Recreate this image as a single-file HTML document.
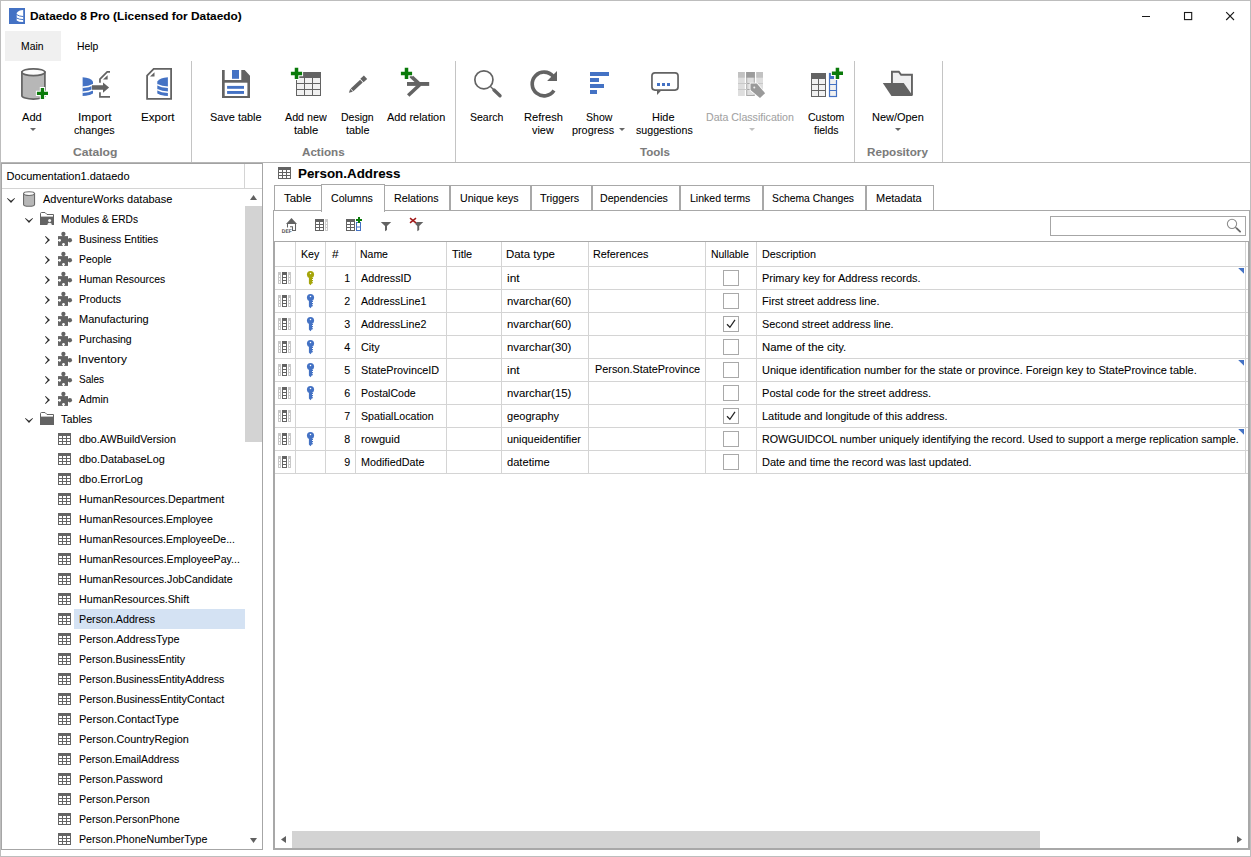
<!DOCTYPE html>
<html lang="en"><head><meta charset="utf-8"><title>Dataedo 8 Pro</title>
<style>
*{box-sizing:border-box;margin:0;padding:0}
html,body{width:1251px;height:857px;overflow:hidden;background:#fff}
body{position:relative;font-family:"Liberation Sans",sans-serif;font-size:11px;color:#000;-webkit-text-stroke-width:.07px}
.a{position:absolute}
.t{position:absolute;white-space:nowrap;line-height:20px;height:20px;transform-origin:0 50%}
.b{font-weight:bold}
.ln{position:absolute;background:#d4d4d4}
.sep{position:absolute;top:61px;height:101px;width:1px;background:#c4c4c4}
.dd{position:absolute;width:0;height:0;border-left:3px solid transparent;border-right:3px solid transparent;border-top:3px solid #666}
.tab{position:absolute;top:185px;height:26px;border:1px solid #a8a8a8;background:#fff}
.tab.act{top:184px;height:28px;border-bottom:none;z-index:3}
.cb{position:absolute;width:16px;height:16px;border:1px solid #a9a9a9;background:#fff}
svg{position:absolute;overflow:visible}
</style></head>
<body>
<div class="a" style="left:0;top:0;width:1251px;height:857px;border:1px solid #bdbdbd"></div>
<svg style="left:9px;top:8px" width="16" height="16" viewBox="0 0 16 16"><rect width="16" height="16" fill="#4472c4"/><path d="M14.2 2Q9.6 2.2 7.7 5V12.4Q9.6 14 14.2 14.1Z" fill="#fff"/><path d="M7.3 6.4Q10 8.4 14.5 8.6M7.3 9.9Q10 11.5 14.5 11.6" stroke="#4472c4" stroke-width="1" fill="none"/></svg>
<div class="t b" style="left:29.60px;transform:scaleX(1.0792);top:6px">Dataedo 8 Pro (Licensed for Dataedo)</div>
<div class="a" style="left:1142px;top:16px;width:8px;height:1px;background:#1a1a1a"></div>
<svg style="left:1184px;top:12px" width="9" height="9" viewBox="0 0 9 9"><rect x=".5" y=".5" width="7.2" height="7.1" stroke="#1a1a1a" stroke-width="1.1" fill="none"/></svg>
<svg style="left:1226px;top:12px" width="9" height="9" viewBox="0 0 9 9"><path d="M.2 .2L8 8M8 .2L.2 8" stroke="#1a1a1a" stroke-width="1.15" fill="none"/></svg>
<div class="a" style="left:5px;top:31px;width:56px;height:30px;background:#f0f0f0"></div>
<div class="t" style="left:21.00px;transform:scaleX(0.9442);top:36px">Main</div>
<div class="t" style="left:76.80px;transform:scaleX(0.9464);top:36px">Help</div>
<div class="sep" style="left:191px"></div>
<div class="sep" style="left:455px"></div>
<div class="sep" style="left:854px"></div>
<div class="sep" style="left:942px"></div>
<div class="ln" style="left:1px;top:162px;width:1249px;height:1px;background:#b6b6b6"></div>
<div class="t" style="left:21.70px;transform:scaleX(1.0075);top:107px">Add</div>
<div class="dd" style="left:30.3px;top:128px"></div>
<div class="t" style="left:77.81px;transform:scaleX(1.0800);top:107px">Import</div>
<div class="t" style="left:74.40px;transform:scaleX(0.9765);top:120px">changes</div>
<div class="t" style="left:141.30px;transform:scaleX(1.0556);top:107px">Export</div>
<div class="t" style="left:209.80px;transform:scaleX(0.9930);top:107px">Save table</div>
<div class="t" style="left:285.30px;transform:scaleX(0.9752);top:107px">Add new</div>
<div class="t" style="left:294.30px;transform:scaleX(1.0196);top:120px">table</div>
<div class="t" style="left:341.00px;transform:scaleX(0.9554);top:107px">Design</div>
<div class="t" style="left:345.80px;transform:scaleX(0.9817);top:120px">table</div>
<div class="t" style="left:387.30px;transform:scaleX(0.9917);top:107px">Add relation</div>
<div class="t" style="left:469.90px;transform:scaleX(0.9558);top:107px">Search</div>
<div class="t" style="left:523.70px;transform:scaleX(1.0105);top:107px">Refresh</div>
<div class="t" style="left:532.30px;transform:scaleX(0.9881);top:120px">view</div>
<div class="t" style="left:585.70px;transform:scaleX(0.9575);top:107px">Show</div>
<div class="t" style="left:571.90px;transform:scaleX(0.9839);top:120px">progress</div>
<div class="dd" style="left:619.3px;top:128px"></div>
<div class="t" style="left:652.30px;transform:scaleX(0.9953);top:107px">Hide</div>
<div class="t" style="left:636.30px;transform:scaleX(0.9661);top:120px">suggestions</div>
<div class="t" style="color:#a2a2a2;left:706.30px;transform:scaleX(0.9651);top:107px">Data Classification</div>
<div class="dd" style="left:748.6px;top:128px;border-top-color:#c0c0c0"></div>
<div class="t" style="left:807.90px;transform:scaleX(0.9593);top:107px">Custom</div>
<div class="t" style="left:813.70px;transform:scaleX(0.9550);top:120px">fields</div>
<div class="t" style="left:871.90px;transform:scaleX(0.9951);top:107px">New/Open</div>
<div class="dd" style="left:895.4px;top:128px"></div>
<div class="t b" style="color:#7b7b7b;left:73.20px;transform:scaleX(1.1005);top:142px">Catalog</div>
<div class="t b" style="color:#7b7b7b;left:301.50px;transform:scaleX(1.0567);top:142px">Actions</div>
<div class="t b" style="color:#7b7b7b;left:640.30px;transform:scaleX(1.0494);top:142px">Tools</div>
<div class="t b" style="color:#7b7b7b;left:866.90px;transform:scaleX(1.0594);top:142px">Repository</div>
<svg style="left:20px;top:67px" width="32" height="34" viewBox="0 0 32 34"><path d="M1.9 5.2V28.65A11.5 3.4 0 0 0 24.9 28.65V5.2Z" fill="#b7b7b7" stroke="#636363" stroke-width="1.7"/><ellipse cx="13.4" cy="5.2" rx="11.5" ry="3.4" fill="#fbfbfb" stroke="#636363" stroke-width="1.7"/><path d="M20.80 20.90h3.3v3.90h3.90v3.3h-3.90v3.90h-3.3v-3.90h-3.90v-3.3h3.90Z" fill="#fff" stroke="#fff" stroke-width="2"/><path d="M20.80 20.90h3.3v3.90h3.90v3.3h-3.90v3.90h-3.3v-3.90h-3.90v-3.3h3.90Z" fill="#0a7a0a"/></svg>
<svg style="left:80px;top:67px" width="32" height="34" viewBox="0 0 32 34"><path d="M2.65 10.3Q10.5 10.6 13 14.6V26.5Q10 28.8 2.65 29.1Z" fill="#4472c4"/><path d="M2.4 20.3Q9 19.9 13.2 17.6M2.4 25.3Q9 24.9 13.2 22.6M4.6 30.1Q10.5 29.5 13.4 27.3" stroke="#fff" stroke-width="1.5" fill="none"/><path d="M19.95 15.7V12.1L27.2 4.85H30M19.95 25.3V29.85H30" stroke="#636363" stroke-width="1.7" fill="none"/><path d="M27.6 8.2V12.6H23Z" fill="#636363"/><path d="M12 18.2H23V15.5L29.1 20.5L23 25.7V22.8H12Z" fill="#636363" stroke="#fff" stroke-width="1" paint-order="stroke"/></svg>
<svg style="left:143px;top:67px" width="32" height="34" viewBox="0 0 32 34"><path d="M4.1 8.6L10.7 1.9H28.1V31.8H4.1Z" fill="#fff" stroke="#636363" stroke-width="1.8"/><path d="M11.5 5.3V9.6H7Z" fill="#636363"/><path d="M24.9 10.3Q17 10.6 14.3 14.6V26.5Q17.3 28.8 24.9 29.1Z" fill="#4472c4"/><path d="M25.2 20.3Q18.5 19.9 14.1 17.6M25.2 25.3Q18.5 24.9 14.1 22.6M22.9 30.1Q17 29.5 13.9 27.3" stroke="#fff" stroke-width="1.5" fill="none"/></svg>
<svg style="left:220px;top:67px" width="32" height="34" viewBox="0 0 32 34"><path d="M2 3H4.7V13H21.3V3H24.7L30 8.7V31H2Z" fill="#636363"/><rect x="4.7" y="15.7" width="22.7" height="13.3" fill="#fff"/><rect x="12" y="3" width="7" height="8.8" fill="#4472c4"/><rect x="7.1" y="18.9" width="16.9" height="2.9" fill="#4472c4"/><rect x="7.1" y="24" width="16.9" height="2.9" fill="#4472c4"/></svg>
<svg style="left:290px;top:67px" width="32" height="34" viewBox="0 0 32 34"><rect x="6" y="5" width="25" height="24" fill="#636363"/><rect x="7" y="11" width="7" height="5" fill="#f1f1f1"/><rect x="7" y="17" width="7" height="5" fill="#f1f1f1"/><rect x="7" y="23" width="7" height="5" fill="#f1f1f1"/><rect x="15" y="11" width="7" height="5" fill="#f1f1f1"/><rect x="15" y="17" width="7" height="5" fill="#f1f1f1"/><rect x="15" y="23" width="7" height="5" fill="#f1f1f1"/><rect x="23" y="11" width="7" height="5" fill="#f1f1f1"/><rect x="23" y="17" width="7" height="5" fill="#f1f1f1"/><rect x="23" y="23" width="7" height="5" fill="#f1f1f1"/><path d="M4.75 0.80h3.5v3.85h3.85v3.5h-3.85v3.85h-3.5v-3.85h-3.85v-3.5h3.85Z" fill="#fff" stroke="#fff" stroke-width="2"/><path d="M4.75 0.80h3.5v3.85h3.85v3.5h-3.85v3.85h-3.5v-3.85h-3.85v-3.5h3.85Z" fill="#0a7a0a"/></svg>
<svg style="left:341px;top:67px" width="32" height="34" viewBox="0 0 32 34"><g transform="translate(7.9 25.7) rotate(-42.9)" fill="#636363"><path d="M0 0L3.6 -1.9V1.9Z"/><rect x="4.3" y="-1.9" width="12.8" height="3.8"/><rect x="17.8" y="-2.4" width="4.9" height="4.8"/></g></svg>
<svg style="left:400px;top:67px" width="32" height="34" viewBox="0 0 32 34"><rect x="7" y="15" width="22.2" height="3.9" fill="#636363"/><path d="M8.2 28.6L20 17.4" stroke="#636363" stroke-width="3.5" fill="none"/><path d="M10.4 8.6L20 17.6" stroke="#636363" stroke-width="3.5" fill="none"/><path d="M4.75 0.80h3.5v3.85h3.85v3.5h-3.85v3.85h-3.5v-3.85h-3.85v-3.5h3.85Z" fill="#fff" stroke="#fff" stroke-width="2"/><path d="M4.75 0.80h3.5v3.85h3.85v3.5h-3.85v3.85h-3.5v-3.85h-3.85v-3.5h3.85Z" fill="#0a7a0a"/></svg>
<svg style="left:471px;top:67px" width="32" height="34" viewBox="0 0 32 34"><circle cx="12.9" cy="12.85" r="9.05" fill="none" stroke="#636363" stroke-width="1.7"/><path d="M19.2 19.2L23 23" stroke="#636363" stroke-width="1.3"/><path d="M23 23.1L29 28.8" stroke="#636363" stroke-width="3.4" stroke-linecap="round"/></svg>
<svg style="left:528px;top:67px" width="32" height="34" viewBox="0 0 32 34"><path d="M25.97 23.6A11.9 11.9 0 1 1 25.08 9.14" fill="none" stroke="#636363" stroke-width="3.65"/><path d="M29 4.1V13.9H19.1Z" fill="#636363"/></svg>
<svg style="left:584px;top:67px" width="32" height="34" viewBox="0 0 32 34"><rect x="6" y="5" width="19" height="4" fill="#4472c4"/><rect x="6" y="11" width="9" height="4" fill="#4472c4"/><rect x="6" y="17" width="14" height="4" fill="#4472c4"/><rect x="6" y="23" width="7" height="4" fill="#4472c4"/></svg>
<svg style="left:649px;top:67px" width="32" height="34" viewBox="0 0 32 34"><path d="M8 23V28L12.8 23Z" fill="#636363"/><rect x="2.95" y="5.85" width="26.1" height="17.2" rx="3" ry="3" fill="#fff" stroke="#636363" stroke-width="1.7"/><rect x="8" y="16" width="3" height="3" fill="#4472c4"/><rect x="13" y="16" width="3" height="3" fill="#4472c4"/><rect x="18" y="16" width="3" height="3" fill="#4472c4"/></svg>
<svg style="left:735px;top:67px" width="32" height="34" viewBox="0 0 32 34"><rect x="3" y="5" width="6.8" height="24" fill="#dedede"/><rect x="3" y="5" width="6.8" height="5.7" fill="#c2c2c2"/><rect x="11.2" y="5" width="8.6" height="24" fill="#a9a9a9"/><rect x="11.2" y="5" width="8.6" height="5.7" fill="#9c9c9c"/><rect x="21.25" y="5" width="6.75" height="24" fill="#dedede"/><rect x="21.25" y="5" width="6.75" height="5.7" fill="#c2c2c2"/><rect x="12.2" y="10.7" width="6.6" height="17.3" fill="#dedede"/><path d="M3 16.5H28M3 22.5H28" stroke="#c9c9c9" stroke-width="1"/><path d="M12.2 16.5H18.8M12.2 22.5H18.8" stroke="#a9a9a9" stroke-width="1"/><path d="M15.5 16.6H21.9L30.1 26.2L25 30.9L15.5 23Z" fill="#9a9a9a" stroke="#fff" stroke-width="1.6" paint-order="stroke"/><circle cx="19.3" cy="20.6" r="1" fill="#eee"/></svg>
<svg style="left:811px;top:67px" width="32" height="34" viewBox="0 0 32 34"><rect x="0" y="6" width="15" height="24" fill="#636363"/><rect x="1" y="12" width="6" height="5" fill="#f1f1f1"/><rect x="1" y="18" width="6" height="5" fill="#f1f1f1"/><rect x="1" y="24" width="6" height="5" fill="#f1f1f1"/><rect x="8" y="12" width="6" height="5" fill="#f1f1f1"/><rect x="8" y="18" width="6" height="5" fill="#f1f1f1"/><rect x="8" y="24" width="6" height="5" fill="#f1f1f1"/><rect x="18.5" y="6.5" width="7" height="23" fill="#f1f1f1" stroke="#4472c4" stroke-width="1.2"/><rect x="18" y="6" width="5" height="6" fill="#4472c4"/><path d="M18 17.5H26M18 23.5H26" stroke="#4472c4" stroke-width="1.2"/><path d="M24.70 0.80h3.5v3.80h3.80v3.5h-3.80v3.80h-3.5v-3.80h-3.80v-3.5h3.80Z" fill="#fff" stroke="#fff" stroke-width="2"/><path d="M24.70 0.80h3.5v3.80h3.80v3.5h-3.80v3.80h-3.5v-3.80h-3.80v-3.5h3.80Z" fill="#0a7a0a"/></svg>
<svg style="left:882px;top:67px" width="32" height="34" viewBox="0 0 32 34"><path d="M9.95 17V4.75H16.8L19.1 7.8H29.95V28" fill="#efeff0" stroke="#636363" stroke-width="1.9" stroke-linejoin="miter"/><path d="M0.8 16.1H21.75L30.9 28.9H9.45Z" fill="#636363"/></svg>
<div class="a" style="left:1px;top:163px;width:262px;height:687px;border:1px solid #a6a6a6;border-top-color:#a2a2a2"></div>
<div class="ln" style="left:2px;top:188px;width:260px;height:1px"></div>
<div class="ln" style="left:244px;top:164px;width:1px;height:24px"></div>
<div class="t" style="left:6.60px;transform:scaleX(1.0000);top:166px">Documentation1.dataedo</div>
<div class="a" style="left:245px;top:206px;width:17px;height:236px;background:#d3d3d3"></div>
<svg style="left:250px;top:195px" width="7" height="5" viewBox="0 0 7 5"><path d="M0 5L3.5 0L7 5Z" fill="#606060"/></svg>
<svg style="left:250px;top:838px" width="7" height="5" viewBox="0 0 7 5"><path d="M0 0L3.5 5L7 0Z" fill="#606060"/></svg>
<div class="a" style="left:74px;top:609px;width:171px;height:20px;background:#d4e2f3"></div>
<svg style="left:7.0px;top:198.1px" width="8" height="5" viewBox="0 0 8 5"><path d="M.4 0L4 2.7L7.6 0L8 .6L4 4.9L0 .6Z" fill="#2c2c2c"/></svg>
<svg style="left:23px;top:191px" width="13" height="16" viewBox="0 0 13 16"><path d="M.55 2.6V13.4A5.5 1.9 0 0 0 11.55 13.4V2.6Z" fill="#b7b7b7" stroke="#6a6a6a" stroke-width="1.1"/><ellipse cx="6.05" cy="2.6" rx="5.5" ry="1.9" fill="#fbfbfb" stroke="#6a6a6a" stroke-width="1.1"/></svg>
<div class="t" style="left:43.10px;transform:scaleX(0.9992);top:189px">AdventureWorks database</div>
<svg style="left:25.2px;top:218.1px" width="8" height="5" viewBox="0 0 8 5"><path d="M.4 0L4 2.7L7.6 0L8 .6L4 4.9L0 .6Z" fill="#2c2c2c"/></svg>
<svg style="left:40px;top:212px" width="14" height="13" viewBox="0 0 14 13"><path d="M0.5 5V1.6Q0.5 .6 1.5 .5H5L7 2.5H13.5V5" fill="#fff" stroke="#636363" stroke-width="1"/><rect x="0" y="4.6" width="14" height="8.4" fill="#636363"/><circle cx="9.6" cy="8.5" r="1.5" fill="#f4f4f4"/><path d="M7.3 13Q7.4 10.7 9.6 10.7T11.9 13Z" fill="#f4f4f4"/></svg>
<div class="t" style="left:60.90px;transform:scaleX(0.9187);top:209px">Modules &amp; ERDs</div>
<svg style="left:45px;top:236.1px" width="5" height="8" viewBox="0 0 5 8"><path d="M0 .4L.6 0L5 4L.6 8L0 7.6L2.8 4Z" fill="#2c2c2c"/></svg>
<svg style="left:58px;top:232px" width="14" height="14" viewBox="0 0 14 14"><rect x="0" y="4.1" width="10" height="9.8" fill="#636363"/><circle cx="5.4" cy="2" r="2.15" fill="#636363"/><rect x="4.55" y="3" width="1.7" height="1.6" fill="#636363"/><circle cx="11.9" cy="8.25" r="2.15" fill="#636363"/><rect x="9.8" y="7.4" width="1.2" height="1.7" fill="#636363"/><circle cx="1.65" cy="8.35" r="1.3" fill="#fff"/><rect x="0" y="7.8" width="1" height="1.1" fill="#fff"/><circle cx="5.5" cy="12.2" r="1.3" fill="#fff"/><rect x="4.95" y="12.9" width="1.1" height="1.1" fill="#fff"/></svg>
<div class="t" style="left:78.80px;transform:scaleX(0.9470);top:229px">Business Entities</div>
<svg style="left:45px;top:256.1px" width="5" height="8" viewBox="0 0 5 8"><path d="M0 .4L.6 0L5 4L.6 8L0 7.6L2.8 4Z" fill="#2c2c2c"/></svg>
<svg style="left:58px;top:252px" width="14" height="14" viewBox="0 0 14 14"><rect x="0" y="4.1" width="10" height="9.8" fill="#636363"/><circle cx="5.4" cy="2" r="2.15" fill="#636363"/><rect x="4.55" y="3" width="1.7" height="1.6" fill="#636363"/><circle cx="11.9" cy="8.25" r="2.15" fill="#636363"/><rect x="9.8" y="7.4" width="1.2" height="1.7" fill="#636363"/><circle cx="1.65" cy="8.35" r="1.3" fill="#fff"/><rect x="0" y="7.8" width="1" height="1.1" fill="#fff"/><circle cx="5.5" cy="12.2" r="1.3" fill="#fff"/><rect x="4.95" y="12.9" width="1.1" height="1.1" fill="#fff"/></svg>
<div class="t" style="left:78.80px;transform:scaleX(0.9492);top:249px">People</div>
<svg style="left:45px;top:276.1px" width="5" height="8" viewBox="0 0 5 8"><path d="M0 .4L.6 0L5 4L.6 8L0 7.6L2.8 4Z" fill="#2c2c2c"/></svg>
<svg style="left:58px;top:272px" width="14" height="14" viewBox="0 0 14 14"><rect x="0" y="4.1" width="10" height="9.8" fill="#636363"/><circle cx="5.4" cy="2" r="2.15" fill="#636363"/><rect x="4.55" y="3" width="1.7" height="1.6" fill="#636363"/><circle cx="11.9" cy="8.25" r="2.15" fill="#636363"/><rect x="9.8" y="7.4" width="1.2" height="1.7" fill="#636363"/><circle cx="1.65" cy="8.35" r="1.3" fill="#fff"/><rect x="0" y="7.8" width="1" height="1.1" fill="#fff"/><circle cx="5.5" cy="12.2" r="1.3" fill="#fff"/><rect x="4.95" y="12.9" width="1.1" height="1.1" fill="#fff"/></svg>
<div class="t" style="left:78.80px;transform:scaleX(0.9455);top:269px">Human Resources</div>
<svg style="left:45px;top:296.1px" width="5" height="8" viewBox="0 0 5 8"><path d="M0 .4L.6 0L5 4L.6 8L0 7.6L2.8 4Z" fill="#2c2c2c"/></svg>
<svg style="left:58px;top:292px" width="14" height="14" viewBox="0 0 14 14"><rect x="0" y="4.1" width="10" height="9.8" fill="#636363"/><circle cx="5.4" cy="2" r="2.15" fill="#636363"/><rect x="4.55" y="3" width="1.7" height="1.6" fill="#636363"/><circle cx="11.9" cy="8.25" r="2.15" fill="#636363"/><rect x="9.8" y="7.4" width="1.2" height="1.7" fill="#636363"/><circle cx="1.65" cy="8.35" r="1.3" fill="#fff"/><rect x="0" y="7.8" width="1" height="1.1" fill="#fff"/><circle cx="5.5" cy="12.2" r="1.3" fill="#fff"/><rect x="4.95" y="12.9" width="1.1" height="1.1" fill="#fff"/></svg>
<div class="t" style="left:78.80px;transform:scaleX(0.9679);top:289px">Products</div>
<svg style="left:45px;top:316.1px" width="5" height="8" viewBox="0 0 5 8"><path d="M0 .4L.6 0L5 4L.6 8L0 7.6L2.8 4Z" fill="#2c2c2c"/></svg>
<svg style="left:58px;top:312px" width="14" height="14" viewBox="0 0 14 14"><rect x="0" y="4.1" width="10" height="9.8" fill="#636363"/><circle cx="5.4" cy="2" r="2.15" fill="#636363"/><rect x="4.55" y="3" width="1.7" height="1.6" fill="#636363"/><circle cx="11.9" cy="8.25" r="2.15" fill="#636363"/><rect x="9.8" y="7.4" width="1.2" height="1.7" fill="#636363"/><circle cx="1.65" cy="8.35" r="1.3" fill="#fff"/><rect x="0" y="7.8" width="1" height="1.1" fill="#fff"/><circle cx="5.5" cy="12.2" r="1.3" fill="#fff"/><rect x="4.95" y="12.9" width="1.1" height="1.1" fill="#fff"/></svg>
<div class="t" style="left:78.80px;transform:scaleX(1.0002);top:309px">Manufacturing</div>
<svg style="left:45px;top:336.1px" width="5" height="8" viewBox="0 0 5 8"><path d="M0 .4L.6 0L5 4L.6 8L0 7.6L2.8 4Z" fill="#2c2c2c"/></svg>
<svg style="left:58px;top:332px" width="14" height="14" viewBox="0 0 14 14"><rect x="0" y="4.1" width="10" height="9.8" fill="#636363"/><circle cx="5.4" cy="2" r="2.15" fill="#636363"/><rect x="4.55" y="3" width="1.7" height="1.6" fill="#636363"/><circle cx="11.9" cy="8.25" r="2.15" fill="#636363"/><rect x="9.8" y="7.4" width="1.2" height="1.7" fill="#636363"/><circle cx="1.65" cy="8.35" r="1.3" fill="#fff"/><rect x="0" y="7.8" width="1" height="1.1" fill="#fff"/><circle cx="5.5" cy="12.2" r="1.3" fill="#fff"/><rect x="4.95" y="12.9" width="1.1" height="1.1" fill="#fff"/></svg>
<div class="t" style="left:78.80px;transform:scaleX(0.9579);top:329px">Purchasing</div>
<svg style="left:45px;top:356.1px" width="5" height="8" viewBox="0 0 5 8"><path d="M0 .4L.6 0L5 4L.6 8L0 7.6L2.8 4Z" fill="#2c2c2c"/></svg>
<svg style="left:58px;top:352px" width="14" height="14" viewBox="0 0 14 14"><rect x="0" y="4.1" width="10" height="9.8" fill="#636363"/><circle cx="5.4" cy="2" r="2.15" fill="#636363"/><rect x="4.55" y="3" width="1.7" height="1.6" fill="#636363"/><circle cx="11.9" cy="8.25" r="2.15" fill="#636363"/><rect x="9.8" y="7.4" width="1.2" height="1.7" fill="#636363"/><circle cx="1.65" cy="8.35" r="1.3" fill="#fff"/><rect x="0" y="7.8" width="1" height="1.1" fill="#fff"/><circle cx="5.5" cy="12.2" r="1.3" fill="#fff"/><rect x="4.95" y="12.9" width="1.1" height="1.1" fill="#fff"/></svg>
<div class="t" style="left:77.72px;transform:scaleX(1.0800);top:349px">Inventory</div>
<svg style="left:45px;top:376.1px" width="5" height="8" viewBox="0 0 5 8"><path d="M0 .4L.6 0L5 4L.6 8L0 7.6L2.8 4Z" fill="#2c2c2c"/></svg>
<svg style="left:58px;top:372px" width="14" height="14" viewBox="0 0 14 14"><rect x="0" y="4.1" width="10" height="9.8" fill="#636363"/><circle cx="5.4" cy="2" r="2.15" fill="#636363"/><rect x="4.55" y="3" width="1.7" height="1.6" fill="#636363"/><circle cx="11.9" cy="8.25" r="2.15" fill="#636363"/><rect x="9.8" y="7.4" width="1.2" height="1.7" fill="#636363"/><circle cx="1.65" cy="8.35" r="1.3" fill="#fff"/><rect x="0" y="7.8" width="1" height="1.1" fill="#fff"/><circle cx="5.5" cy="12.2" r="1.3" fill="#fff"/><rect x="4.95" y="12.9" width="1.1" height="1.1" fill="#fff"/></svg>
<div class="t" style="left:78.80px;transform:scaleX(0.9102);top:369px">Sales</div>
<svg style="left:45px;top:396.1px" width="5" height="8" viewBox="0 0 5 8"><path d="M0 .4L.6 0L5 4L.6 8L0 7.6L2.8 4Z" fill="#2c2c2c"/></svg>
<svg style="left:58px;top:392px" width="14" height="14" viewBox="0 0 14 14"><rect x="0" y="4.1" width="10" height="9.8" fill="#636363"/><circle cx="5.4" cy="2" r="2.15" fill="#636363"/><rect x="4.55" y="3" width="1.7" height="1.6" fill="#636363"/><circle cx="11.9" cy="8.25" r="2.15" fill="#636363"/><rect x="9.8" y="7.4" width="1.2" height="1.7" fill="#636363"/><circle cx="1.65" cy="8.35" r="1.3" fill="#fff"/><rect x="0" y="7.8" width="1" height="1.1" fill="#fff"/><circle cx="5.5" cy="12.2" r="1.3" fill="#fff"/><rect x="4.95" y="12.9" width="1.1" height="1.1" fill="#fff"/></svg>
<div class="t" style="left:78.80px;transform:scaleX(0.9465);top:389px">Admin</div>
<svg style="left:25.2px;top:418.1px" width="8" height="5" viewBox="0 0 8 5"><path d="M.4 0L4 2.7L7.6 0L8 .6L4 4.9L0 .6Z" fill="#2c2c2c"/></svg>
<svg style="left:40px;top:412px" width="14" height="13" viewBox="0 0 14 13"><path d="M0.5 5V1.6Q0.5 .6 1.5 .5H5L7 2.5H13.5V5" fill="#fff" stroke="#636363" stroke-width="1"/><rect x="0" y="4.6" width="14" height="8.4" fill="#636363"/></svg>
<div class="t" style="left:60.90px;transform:scaleX(0.9815);top:409px">Tables</div>
<svg style="left:58px;top:433px" width="13" height="12" viewBox="0 0 13 12"><rect x="0" y="0" width="13" height="12" fill="#636363"/><rect x="1" y="3" width="3" height="2" fill="#fff"/><rect x="1" y="6" width="3" height="2" fill="#fff"/><rect x="1" y="9" width="3" height="2" fill="#fff"/><rect x="5" y="3" width="3" height="2" fill="#fff"/><rect x="5" y="6" width="3" height="2" fill="#fff"/><rect x="5" y="9" width="3" height="2" fill="#fff"/><rect x="9" y="3" width="3" height="2" fill="#fff"/><rect x="9" y="6" width="3" height="2" fill="#fff"/><rect x="9" y="9" width="3" height="2" fill="#fff"/></svg>
<div class="t" style="left:78.80px;transform:scaleX(0.9694);top:429px">dbo.AWBuildVersion</div>
<svg style="left:58px;top:453px" width="13" height="12" viewBox="0 0 13 12"><rect x="0" y="0" width="13" height="12" fill="#636363"/><rect x="1" y="3" width="3" height="2" fill="#fff"/><rect x="1" y="6" width="3" height="2" fill="#fff"/><rect x="1" y="9" width="3" height="2" fill="#fff"/><rect x="5" y="3" width="3" height="2" fill="#fff"/><rect x="5" y="6" width="3" height="2" fill="#fff"/><rect x="5" y="9" width="3" height="2" fill="#fff"/><rect x="9" y="3" width="3" height="2" fill="#fff"/><rect x="9" y="6" width="3" height="2" fill="#fff"/><rect x="9" y="9" width="3" height="2" fill="#fff"/></svg>
<div class="t" style="left:78.80px;transform:scaleX(0.9869);top:449px">dbo.DatabaseLog</div>
<svg style="left:58px;top:473px" width="13" height="12" viewBox="0 0 13 12"><rect x="0" y="0" width="13" height="12" fill="#636363"/><rect x="1" y="3" width="3" height="2" fill="#fff"/><rect x="1" y="6" width="3" height="2" fill="#fff"/><rect x="1" y="9" width="3" height="2" fill="#fff"/><rect x="5" y="3" width="3" height="2" fill="#fff"/><rect x="5" y="6" width="3" height="2" fill="#fff"/><rect x="5" y="9" width="3" height="2" fill="#fff"/><rect x="9" y="3" width="3" height="2" fill="#fff"/><rect x="9" y="6" width="3" height="2" fill="#fff"/><rect x="9" y="9" width="3" height="2" fill="#fff"/></svg>
<div class="t" style="left:78.80px;transform:scaleX(0.9955);top:469px">dbo.ErrorLog</div>
<svg style="left:58px;top:493px" width="13" height="12" viewBox="0 0 13 12"><rect x="0" y="0" width="13" height="12" fill="#636363"/><rect x="1" y="3" width="3" height="2" fill="#fff"/><rect x="1" y="6" width="3" height="2" fill="#fff"/><rect x="1" y="9" width="3" height="2" fill="#fff"/><rect x="5" y="3" width="3" height="2" fill="#fff"/><rect x="5" y="6" width="3" height="2" fill="#fff"/><rect x="5" y="9" width="3" height="2" fill="#fff"/><rect x="9" y="3" width="3" height="2" fill="#fff"/><rect x="9" y="6" width="3" height="2" fill="#fff"/><rect x="9" y="9" width="3" height="2" fill="#fff"/></svg>
<div class="t" style="left:78.80px;transform:scaleX(0.9770);top:489px">HumanResources.Department</div>
<svg style="left:58px;top:513px" width="13" height="12" viewBox="0 0 13 12"><rect x="0" y="0" width="13" height="12" fill="#636363"/><rect x="1" y="3" width="3" height="2" fill="#fff"/><rect x="1" y="6" width="3" height="2" fill="#fff"/><rect x="1" y="9" width="3" height="2" fill="#fff"/><rect x="5" y="3" width="3" height="2" fill="#fff"/><rect x="5" y="6" width="3" height="2" fill="#fff"/><rect x="5" y="9" width="3" height="2" fill="#fff"/><rect x="9" y="3" width="3" height="2" fill="#fff"/><rect x="9" y="6" width="3" height="2" fill="#fff"/><rect x="9" y="9" width="3" height="2" fill="#fff"/></svg>
<div class="t" style="left:78.80px;transform:scaleX(0.9557);top:509px">HumanResources.Employee</div>
<svg style="left:58px;top:533px" width="13" height="12" viewBox="0 0 13 12"><rect x="0" y="0" width="13" height="12" fill="#636363"/><rect x="1" y="3" width="3" height="2" fill="#fff"/><rect x="1" y="6" width="3" height="2" fill="#fff"/><rect x="1" y="9" width="3" height="2" fill="#fff"/><rect x="5" y="3" width="3" height="2" fill="#fff"/><rect x="5" y="6" width="3" height="2" fill="#fff"/><rect x="5" y="9" width="3" height="2" fill="#fff"/><rect x="9" y="3" width="3" height="2" fill="#fff"/><rect x="9" y="6" width="3" height="2" fill="#fff"/><rect x="9" y="9" width="3" height="2" fill="#fff"/></svg>
<div class="t" style="left:78.80px;transform:scaleX(0.9554);top:529px">HumanResources.EmployeeDe...</div>
<svg style="left:58px;top:553px" width="13" height="12" viewBox="0 0 13 12"><rect x="0" y="0" width="13" height="12" fill="#636363"/><rect x="1" y="3" width="3" height="2" fill="#fff"/><rect x="1" y="6" width="3" height="2" fill="#fff"/><rect x="1" y="9" width="3" height="2" fill="#fff"/><rect x="5" y="3" width="3" height="2" fill="#fff"/><rect x="5" y="6" width="3" height="2" fill="#fff"/><rect x="5" y="9" width="3" height="2" fill="#fff"/><rect x="9" y="3" width="3" height="2" fill="#fff"/><rect x="9" y="6" width="3" height="2" fill="#fff"/><rect x="9" y="9" width="3" height="2" fill="#fff"/></svg>
<div class="t" style="left:78.80px;transform:scaleX(0.9614);top:549px">HumanResources.EmployeePay...</div>
<svg style="left:58px;top:573px" width="13" height="12" viewBox="0 0 13 12"><rect x="0" y="0" width="13" height="12" fill="#636363"/><rect x="1" y="3" width="3" height="2" fill="#fff"/><rect x="1" y="6" width="3" height="2" fill="#fff"/><rect x="1" y="9" width="3" height="2" fill="#fff"/><rect x="5" y="3" width="3" height="2" fill="#fff"/><rect x="5" y="6" width="3" height="2" fill="#fff"/><rect x="5" y="9" width="3" height="2" fill="#fff"/><rect x="9" y="3" width="3" height="2" fill="#fff"/><rect x="9" y="6" width="3" height="2" fill="#fff"/><rect x="9" y="9" width="3" height="2" fill="#fff"/></svg>
<div class="t" style="left:78.80px;transform:scaleX(0.9669);top:569px">HumanResources.JobCandidate</div>
<svg style="left:58px;top:593px" width="13" height="12" viewBox="0 0 13 12"><rect x="0" y="0" width="13" height="12" fill="#636363"/><rect x="1" y="3" width="3" height="2" fill="#fff"/><rect x="1" y="6" width="3" height="2" fill="#fff"/><rect x="1" y="9" width="3" height="2" fill="#fff"/><rect x="5" y="3" width="3" height="2" fill="#fff"/><rect x="5" y="6" width="3" height="2" fill="#fff"/><rect x="5" y="9" width="3" height="2" fill="#fff"/><rect x="9" y="3" width="3" height="2" fill="#fff"/><rect x="9" y="6" width="3" height="2" fill="#fff"/><rect x="9" y="9" width="3" height="2" fill="#fff"/></svg>
<div class="t" style="left:78.80px;transform:scaleX(0.9739);top:589px">HumanResources.Shift</div>
<svg style="left:58px;top:613px" width="13" height="12" viewBox="0 0 13 12"><rect x="0" y="0" width="13" height="12" fill="#636363"/><rect x="1" y="3" width="3" height="2" fill="#fff"/><rect x="1" y="6" width="3" height="2" fill="#fff"/><rect x="1" y="9" width="3" height="2" fill="#fff"/><rect x="5" y="3" width="3" height="2" fill="#fff"/><rect x="5" y="6" width="3" height="2" fill="#fff"/><rect x="5" y="9" width="3" height="2" fill="#fff"/><rect x="9" y="3" width="3" height="2" fill="#fff"/><rect x="9" y="6" width="3" height="2" fill="#fff"/><rect x="9" y="9" width="3" height="2" fill="#fff"/></svg>
<div class="t" style="left:78.80px;transform:scaleX(0.9713);top:609px">Person.Address</div>
<svg style="left:58px;top:633px" width="13" height="12" viewBox="0 0 13 12"><rect x="0" y="0" width="13" height="12" fill="#636363"/><rect x="1" y="3" width="3" height="2" fill="#fff"/><rect x="1" y="6" width="3" height="2" fill="#fff"/><rect x="1" y="9" width="3" height="2" fill="#fff"/><rect x="5" y="3" width="3" height="2" fill="#fff"/><rect x="5" y="6" width="3" height="2" fill="#fff"/><rect x="5" y="9" width="3" height="2" fill="#fff"/><rect x="9" y="3" width="3" height="2" fill="#fff"/><rect x="9" y="6" width="3" height="2" fill="#fff"/><rect x="9" y="9" width="3" height="2" fill="#fff"/></svg>
<div class="t" style="left:78.80px;transform:scaleX(0.9834);top:629px">Person.AddressType</div>
<svg style="left:58px;top:653px" width="13" height="12" viewBox="0 0 13 12"><rect x="0" y="0" width="13" height="12" fill="#636363"/><rect x="1" y="3" width="3" height="2" fill="#fff"/><rect x="1" y="6" width="3" height="2" fill="#fff"/><rect x="1" y="9" width="3" height="2" fill="#fff"/><rect x="5" y="3" width="3" height="2" fill="#fff"/><rect x="5" y="6" width="3" height="2" fill="#fff"/><rect x="5" y="9" width="3" height="2" fill="#fff"/><rect x="9" y="3" width="3" height="2" fill="#fff"/><rect x="9" y="6" width="3" height="2" fill="#fff"/><rect x="9" y="9" width="3" height="2" fill="#fff"/></svg>
<div class="t" style="left:78.80px;transform:scaleX(0.9642);top:649px">Person.BusinessEntity</div>
<svg style="left:58px;top:673px" width="13" height="12" viewBox="0 0 13 12"><rect x="0" y="0" width="13" height="12" fill="#636363"/><rect x="1" y="3" width="3" height="2" fill="#fff"/><rect x="1" y="6" width="3" height="2" fill="#fff"/><rect x="1" y="9" width="3" height="2" fill="#fff"/><rect x="5" y="3" width="3" height="2" fill="#fff"/><rect x="5" y="6" width="3" height="2" fill="#fff"/><rect x="5" y="9" width="3" height="2" fill="#fff"/><rect x="9" y="3" width="3" height="2" fill="#fff"/><rect x="9" y="6" width="3" height="2" fill="#fff"/><rect x="9" y="9" width="3" height="2" fill="#fff"/></svg>
<div class="t" style="left:78.80px;transform:scaleX(0.9662);top:669px">Person.BusinessEntityAddress</div>
<svg style="left:58px;top:693px" width="13" height="12" viewBox="0 0 13 12"><rect x="0" y="0" width="13" height="12" fill="#636363"/><rect x="1" y="3" width="3" height="2" fill="#fff"/><rect x="1" y="6" width="3" height="2" fill="#fff"/><rect x="1" y="9" width="3" height="2" fill="#fff"/><rect x="5" y="3" width="3" height="2" fill="#fff"/><rect x="5" y="6" width="3" height="2" fill="#fff"/><rect x="5" y="9" width="3" height="2" fill="#fff"/><rect x="9" y="3" width="3" height="2" fill="#fff"/><rect x="9" y="6" width="3" height="2" fill="#fff"/><rect x="9" y="9" width="3" height="2" fill="#fff"/></svg>
<div class="t" style="left:78.80px;transform:scaleX(0.9810);top:689px">Person.BusinessEntityContact</div>
<svg style="left:58px;top:713px" width="13" height="12" viewBox="0 0 13 12"><rect x="0" y="0" width="13" height="12" fill="#636363"/><rect x="1" y="3" width="3" height="2" fill="#fff"/><rect x="1" y="6" width="3" height="2" fill="#fff"/><rect x="1" y="9" width="3" height="2" fill="#fff"/><rect x="5" y="3" width="3" height="2" fill="#fff"/><rect x="5" y="6" width="3" height="2" fill="#fff"/><rect x="5" y="9" width="3" height="2" fill="#fff"/><rect x="9" y="3" width="3" height="2" fill="#fff"/><rect x="9" y="6" width="3" height="2" fill="#fff"/><rect x="9" y="9" width="3" height="2" fill="#fff"/></svg>
<div class="t" style="left:78.80px;transform:scaleX(1.0015);top:709px">Person.ContactType</div>
<svg style="left:58px;top:733px" width="13" height="12" viewBox="0 0 13 12"><rect x="0" y="0" width="13" height="12" fill="#636363"/><rect x="1" y="3" width="3" height="2" fill="#fff"/><rect x="1" y="6" width="3" height="2" fill="#fff"/><rect x="1" y="9" width="3" height="2" fill="#fff"/><rect x="5" y="3" width="3" height="2" fill="#fff"/><rect x="5" y="6" width="3" height="2" fill="#fff"/><rect x="5" y="9" width="3" height="2" fill="#fff"/><rect x="9" y="3" width="3" height="2" fill="#fff"/><rect x="9" y="6" width="3" height="2" fill="#fff"/><rect x="9" y="9" width="3" height="2" fill="#fff"/></svg>
<div class="t" style="left:78.80px;transform:scaleX(0.9877);top:729px">Person.CountryRegion</div>
<svg style="left:58px;top:753px" width="13" height="12" viewBox="0 0 13 12"><rect x="0" y="0" width="13" height="12" fill="#636363"/><rect x="1" y="3" width="3" height="2" fill="#fff"/><rect x="1" y="6" width="3" height="2" fill="#fff"/><rect x="1" y="9" width="3" height="2" fill="#fff"/><rect x="5" y="3" width="3" height="2" fill="#fff"/><rect x="5" y="6" width="3" height="2" fill="#fff"/><rect x="5" y="9" width="3" height="2" fill="#fff"/><rect x="9" y="3" width="3" height="2" fill="#fff"/><rect x="9" y="6" width="3" height="2" fill="#fff"/><rect x="9" y="9" width="3" height="2" fill="#fff"/></svg>
<div class="t" style="left:78.80px;transform:scaleX(0.9485);top:749px">Person.EmailAddress</div>
<svg style="left:58px;top:773px" width="13" height="12" viewBox="0 0 13 12"><rect x="0" y="0" width="13" height="12" fill="#636363"/><rect x="1" y="3" width="3" height="2" fill="#fff"/><rect x="1" y="6" width="3" height="2" fill="#fff"/><rect x="1" y="9" width="3" height="2" fill="#fff"/><rect x="5" y="3" width="3" height="2" fill="#fff"/><rect x="5" y="6" width="3" height="2" fill="#fff"/><rect x="5" y="9" width="3" height="2" fill="#fff"/><rect x="9" y="3" width="3" height="2" fill="#fff"/><rect x="9" y="6" width="3" height="2" fill="#fff"/><rect x="9" y="9" width="3" height="2" fill="#fff"/></svg>
<div class="t" style="left:78.80px;transform:scaleX(0.9711);top:769px">Person.Password</div>
<svg style="left:58px;top:793px" width="13" height="12" viewBox="0 0 13 12"><rect x="0" y="0" width="13" height="12" fill="#636363"/><rect x="1" y="3" width="3" height="2" fill="#fff"/><rect x="1" y="6" width="3" height="2" fill="#fff"/><rect x="1" y="9" width="3" height="2" fill="#fff"/><rect x="5" y="3" width="3" height="2" fill="#fff"/><rect x="5" y="6" width="3" height="2" fill="#fff"/><rect x="5" y="9" width="3" height="2" fill="#fff"/><rect x="9" y="3" width="3" height="2" fill="#fff"/><rect x="9" y="6" width="3" height="2" fill="#fff"/><rect x="9" y="9" width="3" height="2" fill="#fff"/></svg>
<div class="t" style="left:78.80px;transform:scaleX(0.9719);top:789px">Person.Person</div>
<svg style="left:58px;top:813px" width="13" height="12" viewBox="0 0 13 12"><rect x="0" y="0" width="13" height="12" fill="#636363"/><rect x="1" y="3" width="3" height="2" fill="#fff"/><rect x="1" y="6" width="3" height="2" fill="#fff"/><rect x="1" y="9" width="3" height="2" fill="#fff"/><rect x="5" y="3" width="3" height="2" fill="#fff"/><rect x="5" y="6" width="3" height="2" fill="#fff"/><rect x="5" y="9" width="3" height="2" fill="#fff"/><rect x="9" y="3" width="3" height="2" fill="#fff"/><rect x="9" y="6" width="3" height="2" fill="#fff"/><rect x="9" y="9" width="3" height="2" fill="#fff"/></svg>
<div class="t" style="left:78.80px;transform:scaleX(0.9612);top:809px">Person.PersonPhone</div>
<svg style="left:58px;top:833px" width="13" height="12" viewBox="0 0 13 12"><rect x="0" y="0" width="13" height="12" fill="#636363"/><rect x="1" y="3" width="3" height="2" fill="#fff"/><rect x="1" y="6" width="3" height="2" fill="#fff"/><rect x="1" y="9" width="3" height="2" fill="#fff"/><rect x="5" y="3" width="3" height="2" fill="#fff"/><rect x="5" y="6" width="3" height="2" fill="#fff"/><rect x="5" y="9" width="3" height="2" fill="#fff"/><rect x="9" y="3" width="3" height="2" fill="#fff"/><rect x="9" y="6" width="3" height="2" fill="#fff"/><rect x="9" y="9" width="3" height="2" fill="#fff"/></svg>
<div class="t" style="left:78.80px;transform:scaleX(0.9678);top:829px">Person.PhoneNumberType</div>
<svg style="left:278px;top:167px" width="13" height="12" viewBox="0 0 13 12"><rect x="0" y="0" width="13" height="12" fill="#636363"/><rect x="1" y="3" width="3" height="2" fill="#fff"/><rect x="1" y="6" width="3" height="2" fill="#fff"/><rect x="1" y="9" width="3" height="2" fill="#fff"/><rect x="5" y="3" width="3" height="2" fill="#fff"/><rect x="5" y="6" width="3" height="2" fill="#fff"/><rect x="5" y="9" width="3" height="2" fill="#fff"/><rect x="9" y="3" width="3" height="2" fill="#fff"/><rect x="9" y="6" width="3" height="2" fill="#fff"/><rect x="9" y="9" width="3" height="2" fill="#fff"/></svg>
<div class="t b" style="font-size:12px;color:#000;left:297.90px;transform:scaleX(1.1130);top:163.6px">Person.Address</div>
<div class="a" style="left:273px;top:210px;width:977px;height:640px;border:1px solid #a8a8a8"></div>
<div class="a" style="left:274px;top:241px;width:975px;height:608px;border:1px solid #a8a8a8"></div>
<div class="tab" style="left:274px;width:48px"></div>
<div class="t" style="z-index:4;left:283.80px;transform:scaleX(1.0428);top:187.6px">Table</div>
<div class="tab act" style="left:321px;width:64px"></div>
<div class="t" style="z-index:4;left:331.30px;transform:scaleX(0.9635);top:187.6px">Columns</div>
<div class="tab" style="left:384px;width:66px"></div>
<div class="t" style="z-index:4;left:393.80px;transform:scaleX(0.9707);top:187.6px">Relations</div>
<div class="tab" style="left:450px;width:81px"></div>
<div class="t" style="z-index:4;left:459.60px;transform:scaleX(0.9667);top:187.6px">Unique keys</div>
<div class="tab" style="left:531px;width:61px"></div>
<div class="t" style="z-index:4;left:540.10px;transform:scaleX(0.9818);top:187.6px">Triggers</div>
<div class="tab" style="left:592px;width:88px"></div>
<div class="t" style="z-index:4;left:600.20px;transform:scaleX(0.9657);top:187.6px">Dependencies</div>
<div class="tab" style="left:680px;width:83px"></div>
<div class="t" style="z-index:4;left:689.80px;transform:scaleX(0.9563);top:187.6px">Linked terms</div>
<div class="tab" style="left:763px;width:103px"></div>
<div class="t" style="z-index:4;left:772.00px;transform:scaleX(0.9381);top:187.6px">Schema Changes</div>
<div class="tab" style="left:866px;width:68px"></div>
<div class="t" style="z-index:4;left:876.10px;transform:scaleX(0.9969);top:187.6px">Metadata</div>
<svg style="left:281px;top:217px" width="17" height="17" viewBox="0 0 17 17"><path d="M5 6.9L10.5 1L16 6.9Z" fill="#636363"/><path d="M6.5 6.5V10.6M14.5 6.5V13.5H11" stroke="#636363" stroke-width="1.05" fill="none"/><path d="M9 9.8H12M11.5 9.3V13.8" stroke="#636363" stroke-width="1.05" fill="none"/><text x=".8" y="16" font-family="Liberation Sans,sans-serif" font-size="5.6" fill="#4a4a4a" textLength="10" lengthAdjust="spacingAndGlyphs" text-rendering="geometricPrecision" font-weight="bold">DEF</text></svg>
<svg style="left:315px;top:219px" width="13" height="12" viewBox="0 0 13 12"><rect x="0" y="0" width="9" height="12" fill="#636363"/><rect x="1" y="3" width="3" height="2" fill="#fff"/><rect x="1" y="6" width="3" height="2" fill="#fff"/><rect x="1" y="9" width="3" height="2" fill="#fff"/><rect x="5" y="3" width="3" height="2" fill="#fff"/><rect x="5" y="6" width="3" height="2" fill="#fff"/><rect x="5" y="9" width="3" height="2" fill="#fff"/><rect x="10" y="0" width="3" height="12" fill="#cdcdcd"/><rect x="11" y="3" width="1" height="2" fill="#fff"/><rect x="11" y="6" width="1" height="2" fill="#fff"/><rect x="11" y="9" width="1" height="2" fill="#fff"/></svg>
<svg style="left:346px;top:216px" width="17" height="16" viewBox="0 0 17 16"><rect x="0" y="3" width="9" height="12" fill="#636363"/><rect x="1" y="6" width="3" height="2" fill="#fff"/><rect x="1" y="9" width="3" height="2" fill="#fff"/><rect x="1" y="12" width="3" height="2" fill="#fff"/><rect x="5" y="6" width="3" height="2" fill="#fff"/><rect x="5" y="9" width="3" height="2" fill="#fff"/><rect x="5" y="12" width="3" height="2" fill="#fff"/><rect x="10.5" y="6.5" width="4" height="8" fill="#fff" stroke="#4472c4" stroke-width="1"/><path d="M10 11H15" stroke="#4472c4" stroke-width="1"/><path d="M12.00 0.90h2v2.00h2.00v2h-2.00v2.00h-2v-2.00h-2.00v-2h2.00Z" fill="#0a7a0a"/></svg>
<svg style="left:381px;top:222px" width="11" height="10" viewBox="0 0 11 10"><path d="M-.2 0H10.2L6 4.1V8L4 9.2V4.1Z" fill="#636363"/></svg>
<svg style="left:409px;top:217px" width="15" height="15" viewBox="0 0 15 15"><path d="M4.1 5H14.3L10.2 9V13L8.3 14.2V9Z" fill="#636363"/><path d="M1 1.2L7 5.8M7 1.2L1 5.8" stroke="#fff" stroke-width="3"/><path d="M1 1.2L7 5.8M7 1.2L1 5.8" stroke="#a11818" stroke-width="1.5"/></svg>
<div class="a" style="left:1050px;top:216px;width:196px;height:20px;border:1px solid #a6a6a6;background:#fff"></div>
<svg style="left:1226px;top:218px" width="16" height="16" viewBox="0 0 16 16"><circle cx="6" cy="5.8" r="4.65" fill="#fff" stroke="#8c8c8c" stroke-width="1.05"/><path d="M9.3 9.1L10.6 10.3" stroke="#7a7a7a" stroke-width="1.1"/><path d="M10.7 10.4L14.1 13.6" stroke="#6a6a6a" stroke-width="1.9" stroke-linecap="round"/></svg>
<div class="ln" style="left:295px;top:242px;width:1px;height:232px"></div>
<div class="ln" style="left:325px;top:242px;width:1px;height:232px"></div>
<div class="ln" style="left:355px;top:242px;width:1px;height:232px"></div>
<div class="ln" style="left:446px;top:242px;width:1px;height:232px"></div>
<div class="ln" style="left:501px;top:242px;width:1px;height:232px"></div>
<div class="ln" style="left:588px;top:242px;width:1px;height:232px"></div>
<div class="ln" style="left:705px;top:242px;width:1px;height:232px"></div>
<div class="ln" style="left:756px;top:242px;width:1px;height:232px"></div>
<div class="ln" style="left:1245px;top:242px;width:1px;height:232px"></div>
<div class="ln" style="left:275px;top:266px;width:973px;height:1px"></div>
<div class="ln" style="left:275px;top:289px;width:973px;height:1px"></div>
<div class="ln" style="left:275px;top:312px;width:973px;height:1px"></div>
<div class="ln" style="left:275px;top:335px;width:973px;height:1px"></div>
<div class="ln" style="left:275px;top:358px;width:973px;height:1px"></div>
<div class="ln" style="left:275px;top:381px;width:973px;height:1px"></div>
<div class="ln" style="left:275px;top:404px;width:973px;height:1px"></div>
<div class="ln" style="left:275px;top:427px;width:973px;height:1px"></div>
<div class="ln" style="left:275px;top:450px;width:973px;height:1px"></div>
<div class="ln" style="left:275px;top:473px;width:973px;height:1px"></div>
<div class="t" style="left:300.50px;transform:scaleX(0.9664);top:244px">Key</div>
<div class="t" style="left:331.80px;transform:scaleX(1.0800);top:244px">#</div>
<div class="t" style="left:360.40px;transform:scaleX(0.9513);top:244px">Name</div>
<div class="t" style="left:451.90px;transform:scaleX(0.9874);top:244px">Title</div>
<div class="t" style="left:506.30px;transform:scaleX(1.0391);top:244px">Data type</div>
<div class="t" style="left:593.20px;transform:scaleX(0.9832);top:244px">References</div>
<div class="t" style="left:710.70px;transform:scaleX(0.9488);top:244px">Nullable</div>
<div class="t" style="left:761.80px;transform:scaleX(0.9817);top:244px">Description</div>
<svg style="left:278px;top:272px" width="13" height="12" viewBox="0 0 13 12"><rect x="0" y="0" width="3" height="12" fill="#c8c8c8"/><rect x="10" y="0" width="3" height="12" fill="#c8c8c8"/><rect x="1" y="3" width="1" height="2" fill="#fff"/><rect x="1" y="6" width="1" height="2" fill="#fff"/><rect x="1" y="9" width="1" height="2" fill="#fff"/><rect x="11" y="3" width="1" height="2" fill="#fff"/><rect x="11" y="6" width="1" height="2" fill="#fff"/><rect x="11" y="9" width="1" height="2" fill="#fff"/><rect x="4" y="0" width="5" height="12" fill="#636363"/><rect x="5" y="3" width="3" height="2" fill="#fff"/><rect x="5" y="6" width="3" height="2" fill="#fff"/><rect x="5" y="9" width="3" height="2" fill="#fff"/></svg>
<svg style="left:307px;top:271px" width="8" height="15" viewBox="0 0 8 15"><circle cx="3.5" cy="3.5" r="3.55" fill="#a5a50a"/><path d="M1.9 5.5H5V7H6V8.1H5V9.1H6V10.2H5V11.2H6V12.3H5L3.45 14.2L1.9 12.6Z" fill="#a5a50a"/><circle cx="3.5" cy="2.4" r=".75" fill="#fff"/></svg>
<div class="t" style="right:901.08px;transform-origin:100% 50%;transform:scaleX(.97);top:268px">1</div>
<div class="t" style="left:360.90px;transform:scaleX(0.9804);top:268px">AddressID</div>
<div class="t" style="left:506.80px;transform:scaleX(1.0800);top:268px">int</div>
<div class="cb" style="left:723px;top:270px"></div>
<div class="t" style="left:762.00px;transform:scaleX(0.9938);top:268px">Primary key for Address records.</div>
<svg style="left:1238px;top:268px" width="6" height="6" viewBox="0 0 6 6"><path d="M.2 0H6V5.8Z" fill="#4472c4"/></svg>
<svg style="left:278px;top:295px" width="13" height="12" viewBox="0 0 13 12"><rect x="0" y="0" width="3" height="12" fill="#c8c8c8"/><rect x="10" y="0" width="3" height="12" fill="#c8c8c8"/><rect x="1" y="3" width="1" height="2" fill="#fff"/><rect x="1" y="6" width="1" height="2" fill="#fff"/><rect x="1" y="9" width="1" height="2" fill="#fff"/><rect x="11" y="3" width="1" height="2" fill="#fff"/><rect x="11" y="6" width="1" height="2" fill="#fff"/><rect x="11" y="9" width="1" height="2" fill="#fff"/><rect x="4" y="0" width="5" height="12" fill="#636363"/><rect x="5" y="3" width="3" height="2" fill="#fff"/><rect x="5" y="6" width="3" height="2" fill="#fff"/><rect x="5" y="9" width="3" height="2" fill="#fff"/></svg>
<svg style="left:307px;top:294px" width="8" height="15" viewBox="0 0 8 15"><circle cx="3.5" cy="3.5" r="3.55" fill="#4472c4"/><path d="M1.9 5.5H5V7H6V8.1H5V9.1H6V10.2H5V11.2H6V12.3H5L3.45 14.2L1.9 12.6Z" fill="#4472c4"/><circle cx="3.5" cy="2.4" r=".75" fill="#fff"/></svg>
<div class="t" style="right:901.08px;transform-origin:100% 50%;transform:scaleX(.97);top:291px">2</div>
<div class="t" style="left:360.90px;transform:scaleX(0.9710);top:291px">AddressLine1</div>
<div class="t" style="left:506.80px;transform:scaleX(1.0309);top:291px">nvarchar(60)</div>
<div class="cb" style="left:723px;top:293px"></div>
<div class="t" style="left:762.00px;transform:scaleX(1.0015);top:291px">First street address line.</div>
<svg style="left:278px;top:318px" width="13" height="12" viewBox="0 0 13 12"><rect x="0" y="0" width="3" height="12" fill="#c8c8c8"/><rect x="10" y="0" width="3" height="12" fill="#c8c8c8"/><rect x="1" y="3" width="1" height="2" fill="#fff"/><rect x="1" y="6" width="1" height="2" fill="#fff"/><rect x="1" y="9" width="1" height="2" fill="#fff"/><rect x="11" y="3" width="1" height="2" fill="#fff"/><rect x="11" y="6" width="1" height="2" fill="#fff"/><rect x="11" y="9" width="1" height="2" fill="#fff"/><rect x="4" y="0" width="5" height="12" fill="#636363"/><rect x="5" y="3" width="3" height="2" fill="#fff"/><rect x="5" y="6" width="3" height="2" fill="#fff"/><rect x="5" y="9" width="3" height="2" fill="#fff"/></svg>
<svg style="left:307px;top:317px" width="8" height="15" viewBox="0 0 8 15"><circle cx="3.5" cy="3.5" r="3.55" fill="#4472c4"/><path d="M1.9 5.5H5V7H6V8.1H5V9.1H6V10.2H5V11.2H6V12.3H5L3.45 14.2L1.9 12.6Z" fill="#4472c4"/><circle cx="3.5" cy="2.4" r=".75" fill="#fff"/></svg>
<div class="t" style="right:901.08px;transform-origin:100% 50%;transform:scaleX(.97);top:314px">3</div>
<div class="t" style="left:360.90px;transform:scaleX(0.9710);top:314px">AddressLine2</div>
<div class="t" style="left:506.80px;transform:scaleX(1.0309);top:314px">nvarchar(60)</div>
<div class="cb" style="left:723px;top:316px"></div>
<svg style="left:723px;top:316px" width="16" height="16" viewBox="0 0 16 16"><path d="M4 8.3L6.9 11.3L12 3.9" stroke="#262626" stroke-width="1.25" fill="none"/></svg>
<div class="t" style="left:762.00px;transform:scaleX(0.9869);top:314px">Second street address line.</div>
<svg style="left:278px;top:341px" width="13" height="12" viewBox="0 0 13 12"><rect x="0" y="0" width="3" height="12" fill="#c8c8c8"/><rect x="10" y="0" width="3" height="12" fill="#c8c8c8"/><rect x="1" y="3" width="1" height="2" fill="#fff"/><rect x="1" y="6" width="1" height="2" fill="#fff"/><rect x="1" y="9" width="1" height="2" fill="#fff"/><rect x="11" y="3" width="1" height="2" fill="#fff"/><rect x="11" y="6" width="1" height="2" fill="#fff"/><rect x="11" y="9" width="1" height="2" fill="#fff"/><rect x="4" y="0" width="5" height="12" fill="#636363"/><rect x="5" y="3" width="3" height="2" fill="#fff"/><rect x="5" y="6" width="3" height="2" fill="#fff"/><rect x="5" y="9" width="3" height="2" fill="#fff"/></svg>
<svg style="left:307px;top:340px" width="8" height="15" viewBox="0 0 8 15"><circle cx="3.5" cy="3.5" r="3.55" fill="#4472c4"/><path d="M1.9 5.5H5V7H6V8.1H5V9.1H6V10.2H5V11.2H6V12.3H5L3.45 14.2L1.9 12.6Z" fill="#4472c4"/><circle cx="3.5" cy="2.4" r=".75" fill="#fff"/></svg>
<div class="t" style="right:901.08px;transform-origin:100% 50%;transform:scaleX(.97);top:337px">4</div>
<div class="t" style="left:360.90px;transform:scaleX(0.9823);top:337px">City</div>
<div class="t" style="left:506.80px;transform:scaleX(1.0309);top:337px">nvarchar(30)</div>
<div class="cb" style="left:723px;top:339px"></div>
<div class="t" style="left:762.00px;transform:scaleX(1.0311);top:337px">Name of the city.</div>
<svg style="left:278px;top:364px" width="13" height="12" viewBox="0 0 13 12"><rect x="0" y="0" width="3" height="12" fill="#c8c8c8"/><rect x="10" y="0" width="3" height="12" fill="#c8c8c8"/><rect x="1" y="3" width="1" height="2" fill="#fff"/><rect x="1" y="6" width="1" height="2" fill="#fff"/><rect x="1" y="9" width="1" height="2" fill="#fff"/><rect x="11" y="3" width="1" height="2" fill="#fff"/><rect x="11" y="6" width="1" height="2" fill="#fff"/><rect x="11" y="9" width="1" height="2" fill="#fff"/><rect x="4" y="0" width="5" height="12" fill="#636363"/><rect x="5" y="3" width="3" height="2" fill="#fff"/><rect x="5" y="6" width="3" height="2" fill="#fff"/><rect x="5" y="9" width="3" height="2" fill="#fff"/></svg>
<svg style="left:307px;top:363px" width="8" height="15" viewBox="0 0 8 15"><circle cx="3.5" cy="3.5" r="3.55" fill="#4472c4"/><path d="M1.9 5.5H5V7H6V8.1H5V9.1H6V10.2H5V11.2H6V12.3H5L3.45 14.2L1.9 12.6Z" fill="#4472c4"/><circle cx="3.5" cy="2.4" r=".75" fill="#fff"/></svg>
<div class="t" style="right:901.08px;transform-origin:100% 50%;transform:scaleX(.97);top:360px">5</div>
<div class="t" style="left:360.90px;transform:scaleX(0.9832);top:360px">StateProvinceID</div>
<div class="t" style="left:506.80px;transform:scaleX(1.0800);top:360px">int</div>
<div class="t" style="left:594.60px;transform:scaleX(0.9880);top:359px">Person.StateProvince</div>
<div class="cb" style="left:723px;top:362px"></div>
<div class="t" style="left:762.00px;transform:scaleX(0.9986);top:360px">Unique identification number for the state or province. Foreign key to StateProvince table.</div>
<svg style="left:1238px;top:360px" width="6" height="6" viewBox="0 0 6 6"><path d="M.2 0H6V5.8Z" fill="#4472c4"/></svg>
<svg style="left:278px;top:387px" width="13" height="12" viewBox="0 0 13 12"><rect x="0" y="0" width="3" height="12" fill="#c8c8c8"/><rect x="10" y="0" width="3" height="12" fill="#c8c8c8"/><rect x="1" y="3" width="1" height="2" fill="#fff"/><rect x="1" y="6" width="1" height="2" fill="#fff"/><rect x="1" y="9" width="1" height="2" fill="#fff"/><rect x="11" y="3" width="1" height="2" fill="#fff"/><rect x="11" y="6" width="1" height="2" fill="#fff"/><rect x="11" y="9" width="1" height="2" fill="#fff"/><rect x="4" y="0" width="5" height="12" fill="#636363"/><rect x="5" y="3" width="3" height="2" fill="#fff"/><rect x="5" y="6" width="3" height="2" fill="#fff"/><rect x="5" y="9" width="3" height="2" fill="#fff"/></svg>
<svg style="left:307px;top:386px" width="8" height="15" viewBox="0 0 8 15"><circle cx="3.5" cy="3.5" r="3.55" fill="#4472c4"/><path d="M1.9 5.5H5V7H6V8.1H5V9.1H6V10.2H5V11.2H6V12.3H5L3.45 14.2L1.9 12.6Z" fill="#4472c4"/><circle cx="3.5" cy="2.4" r=".75" fill="#fff"/></svg>
<div class="t" style="right:901.08px;transform-origin:100% 50%;transform:scaleX(.97);top:383px">6</div>
<div class="t" style="left:360.90px;transform:scaleX(0.9621);top:383px">PostalCode</div>
<div class="t" style="left:506.80px;transform:scaleX(1.0309);top:383px">nvarchar(15)</div>
<div class="cb" style="left:723px;top:385px"></div>
<div class="t" style="left:762.00px;transform:scaleX(1.0097);top:383px">Postal code for the street address.</div>
<svg style="left:278px;top:410px" width="13" height="12" viewBox="0 0 13 12"><rect x="0" y="0" width="3" height="12" fill="#c8c8c8"/><rect x="10" y="0" width="3" height="12" fill="#c8c8c8"/><rect x="1" y="3" width="1" height="2" fill="#fff"/><rect x="1" y="6" width="1" height="2" fill="#fff"/><rect x="1" y="9" width="1" height="2" fill="#fff"/><rect x="11" y="3" width="1" height="2" fill="#fff"/><rect x="11" y="6" width="1" height="2" fill="#fff"/><rect x="11" y="9" width="1" height="2" fill="#fff"/><rect x="4" y="0" width="5" height="12" fill="#636363"/><rect x="5" y="3" width="3" height="2" fill="#fff"/><rect x="5" y="6" width="3" height="2" fill="#fff"/><rect x="5" y="9" width="3" height="2" fill="#fff"/></svg>
<div class="t" style="right:901.08px;transform-origin:100% 50%;transform:scaleX(.97);top:406px">7</div>
<div class="t" style="left:360.90px;transform:scaleX(0.9653);top:406px">SpatialLocation</div>
<div class="t" style="left:506.80px;transform:scaleX(1.0022);top:406px">geography</div>
<div class="cb" style="left:723px;top:408px"></div>
<svg style="left:723px;top:408px" width="16" height="16" viewBox="0 0 16 16"><path d="M4 8.3L6.9 11.3L12 3.9" stroke="#262626" stroke-width="1.25" fill="none"/></svg>
<div class="t" style="left:762.00px;transform:scaleX(0.9981);top:406px">Latitude and longitude of this address.</div>
<svg style="left:278px;top:433px" width="13" height="12" viewBox="0 0 13 12"><rect x="0" y="0" width="3" height="12" fill="#c8c8c8"/><rect x="10" y="0" width="3" height="12" fill="#c8c8c8"/><rect x="1" y="3" width="1" height="2" fill="#fff"/><rect x="1" y="6" width="1" height="2" fill="#fff"/><rect x="1" y="9" width="1" height="2" fill="#fff"/><rect x="11" y="3" width="1" height="2" fill="#fff"/><rect x="11" y="6" width="1" height="2" fill="#fff"/><rect x="11" y="9" width="1" height="2" fill="#fff"/><rect x="4" y="0" width="5" height="12" fill="#636363"/><rect x="5" y="3" width="3" height="2" fill="#fff"/><rect x="5" y="6" width="3" height="2" fill="#fff"/><rect x="5" y="9" width="3" height="2" fill="#fff"/></svg>
<svg style="left:307px;top:432px" width="8" height="15" viewBox="0 0 8 15"><circle cx="3.5" cy="3.5" r="3.55" fill="#4472c4"/><path d="M1.9 5.5H5V7H6V8.1H5V9.1H6V10.2H5V11.2H6V12.3H5L3.45 14.2L1.9 12.6Z" fill="#4472c4"/><circle cx="3.5" cy="2.4" r=".75" fill="#fff"/></svg>
<div class="t" style="right:901.08px;transform-origin:100% 50%;transform:scaleX(.97);top:429px">8</div>
<div class="t" style="left:360.90px;transform:scaleX(1.0103);top:429px">rowguid</div>
<div class="t" style="left:506.80px;transform:scaleX(0.9900);top:429px">uniqueidentifier</div>
<div class="cb" style="left:723px;top:431px"></div>
<div class="t" style="left:762.00px;transform:scaleX(0.9768);top:429px">ROWGUIDCOL number uniquely identifying the record. Used to support a merge replication sample.</div>
<svg style="left:1238px;top:429px" width="6" height="6" viewBox="0 0 6 6"><path d="M.2 0H6V5.8Z" fill="#4472c4"/></svg>
<svg style="left:278px;top:456px" width="13" height="12" viewBox="0 0 13 12"><rect x="0" y="0" width="3" height="12" fill="#c8c8c8"/><rect x="10" y="0" width="3" height="12" fill="#c8c8c8"/><rect x="1" y="3" width="1" height="2" fill="#fff"/><rect x="1" y="6" width="1" height="2" fill="#fff"/><rect x="1" y="9" width="1" height="2" fill="#fff"/><rect x="11" y="3" width="1" height="2" fill="#fff"/><rect x="11" y="6" width="1" height="2" fill="#fff"/><rect x="11" y="9" width="1" height="2" fill="#fff"/><rect x="4" y="0" width="5" height="12" fill="#636363"/><rect x="5" y="3" width="3" height="2" fill="#fff"/><rect x="5" y="6" width="3" height="2" fill="#fff"/><rect x="5" y="9" width="3" height="2" fill="#fff"/></svg>
<div class="t" style="right:901.08px;transform-origin:100% 50%;transform:scaleX(.97);top:452px">9</div>
<div class="t" style="left:360.90px;transform:scaleX(0.9784);top:452px">ModifiedDate</div>
<div class="t" style="left:506.80px;transform:scaleX(1.0102);top:452px">datetime</div>
<div class="cb" style="left:723px;top:454px"></div>
<div class="t" style="left:762.00px;transform:scaleX(0.9996);top:452px">Date and time the record was last updated.</div>
<div class="a" style="left:292px;top:831px;width:748px;height:17px;background:#d3d3d3"></div>
<svg style="left:281px;top:836px" width="5" height="7" viewBox="0 0 5 7"><path d="M5 0L0 3.5L5 7Z" fill="#606060"/></svg>
<svg style="left:1237px;top:836px" width="5" height="7" viewBox="0 0 5 7"><path d="M0 0L5 3.5L0 7Z" fill="#606060"/></svg>
</body></html>
